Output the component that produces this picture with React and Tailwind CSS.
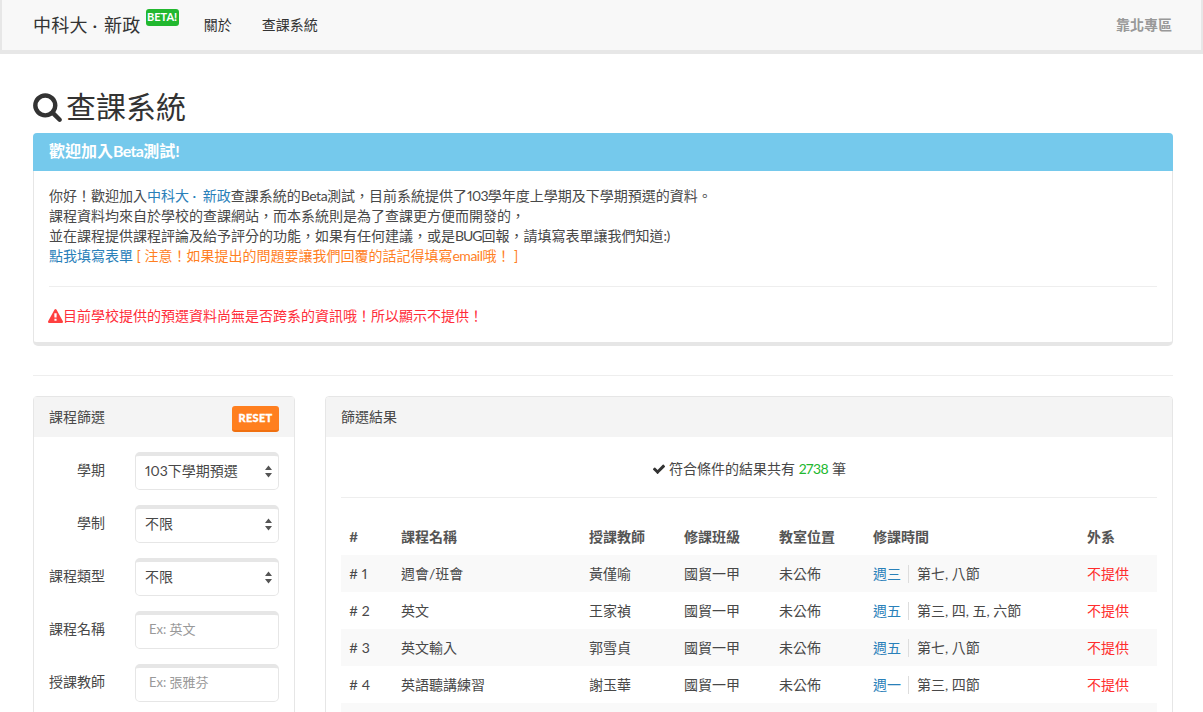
const rows = [
  { id: 1, name: '週會/班會', teacher: '黃僅喻', day: '週三', time: '第七, 八節' },
  { id: 2, name: '英文', teacher: '王家禎', day: '週五', time: '第三, 四, 五, 六節' },
  { id: 3, name: '英文輸入', teacher: '郭雪貞', day: '週五', time: '第七, 八節' },
  { id: 4, name: '英語聽講練習', teacher: '謝玉華', day: '週一', time: '第三, 四節' },
  { id: 5, name: '', teacher: '', day: '', time: '' },
];

const SearchIcon = () => (
  <svg className="-ml-px mr-[3px] text-[#333]" width="31" height="31" viewBox="0 0 1792 1792" fill="currentColor">
    <path d="M1216 832q0-185-131.5-316.5t-316.5-131.5-316.5 131.5-131.5 316.5 131.5 316.5 316.5 131.5 316.5-131.5 131.5-316.5zm512 832q0 52-38 90t-90 38q-54 0-90-38l-343-342q-179 124-399 124-143 0-273.5-55.5t-225-150-150-225-55.5-273.5 55.5-273.5 150-225 225-150 273.5-55.5 273.5 55.5 225 150 150 225 55.5 273.5q0 220-124 399l343 343q37 37 37 90z" />
  </svg>
);

const WarningIcon = () => (
  <svg className="-ml-px text-[#ff4040]" width="15" height="15" viewBox="0 0 1792 1792" fill="currentColor">
    <path d="M1024 1375v-190q0-14-9.5-23.5t-22.5-9.5h-192q-13 0-22.5 9.5t-9.5 23.5v190q0 14 9.5 23.5t22.5 9.5h192q13 0 22.5-9.5t9.5-23.5zm-2-374l18-459q0-12-10-19-13-11-24-11h-220q-11 0-24 11-10 7-10 21l17 457q0 10 10 16.5t24 6.5h185q14 0 23.5-6.5t10.5-16.5zm-14-934l768 1408q35 63-2 126-17 29-46.5 46t-63.5 17h-1536q-34 0-63.5-17t-46.5-46q-37-63-2-126l768-1408q17-31 47-49t65-18 65 18 47 49z" />
  </svg>
);

const CheckIcon = () => (
  <svg className="mr-[3px] text-[#333]" width="14" height="14" viewBox="0 0 1792 1792" fill="currentColor">
    <path d="M1671 566q0 40-28 68l-724 724-136 136q-28 28-68 28t-68-28l-136-136-362-362q-28-28-28-68t28-68l136-136q28-28 68-28t68 28l294 295 656-657q28-28 68-28t68 28l136 136q28 28 28 68z" />
  </svg>
);

const SelectField = ({ label, value }) => (
  <div className="flex items-center h-[38px] mb-[15px]">
    <label className="w-[71px] text-right -mt-0.5">{label}</label>
    <div className="relative ml-[30px] w-[144px]">
      <select
        defaultValue={value}
        className="appearance-none w-full h-[38px] pl-[9px] pr-6 pb-1 rounded-[5px] border border-[#e6e6e6] border-t-4 bg-white text-[14px] text-[#484848] outline-none"
      >
        <option>{value}</option>
      </select>
      <svg className="absolute right-[7px] top-[13px] pointer-events-none" width="7" height="13" viewBox="0 0 7 13">
        <path d="M3.5 0.5 L7 5 L0 5 Z M0 8 L7 8 L3.5 12.5 Z" fill="#555" />
      </svg>
    </div>
  </div>
);

const InputField = ({ label, placeholder }) => (
  <div className="flex items-center h-[38px] mb-[15px]">
    <label className="w-[71px] text-right -mt-0.5">{label}</label>
    <input
      placeholder={placeholder}
      className="ml-[30px] w-[144px] h-[38px] pl-[13px] pr-2 pb-1.5 rounded-[5px] border border-[#e6e6e6] border-t-4 bg-white text-[13px] outline-none placeholder:text-[#999]"
    />
  </div>
);

export default function App() {
  return (
    <div className="h-[712px] overflow-hidden bg-white text-[14px] leading-5 text-[#484848] proportional-nums font-['Lato','Noto_Sans_CJK_TC',sans-serif]">
      <nav className="flex items-center h-[54px] bg-[#f8f8f8] border-l-2 border-r-2 border-b-4 border-[#e7e7e7] pl-[31px] pr-[29px] text-[#333]">
        <a className="text-[18px] leading-[50px] tracking-[0.2px]">中科大 ·<span className="ml-[2px]"> 新政</span></a>
        <span className="self-start mt-[9px] ml-[5px] h-[17px] px-[1.5px] rounded-[3px] bg-[#22b82f] text-white text-[11px] leading-[16px] font-bold">BETA!</span>
        <a className="ml-[25px]">關於</a>
        <a className="ml-[30px]">查課系統</a>
        <a className="ml-auto font-bold text-[#999]">靠北專區</a>
      </nav>

      <main className="w-[1140px] ml-[33px]">
        <h1 className="flex items-center h-[79px] pt-[25px] text-[30px] font-normal text-[#333]">
          <SearchIcon />
          查課系統
        </h1>

        <section className="rounded-[5px] border-x border-[#e6e6e6] border-b-4 h-[213px]">
          <div className="h-[38px] -mx-px px-4 rounded-t-[4px] bg-[#75c9ec] text-white text-[16px] font-bold leading-[36px]">歡迎加入<span className="tracking-[-0.7px]">Beta</span>測試!</div>
          <div className="px-[15px] pt-[15px]">
            <p>
              你好！歡迎加入<span className="text-[#2980b9]">中科大 ·<span className="ml-[3px]"> 新政</span></span>查課系統的<span className="tracking-[-0.5px]">Beta</span>測試，目前系統提供了<span className="tracking-[-0.7px]">103</span>學年度上學期及下學期預選的資料。<br />
              課程資料均來自於學校的查課網站，而本系統則是為了查課更方便而開發的，<br />
              並在課程提供課程評論及給予評分的功能，如果有任何建議，或是<span className="tracking-[-1px]">BUG</span>回報，請填寫表單讓我們知道<span className="tracking-[-0.5px]">:)</span><br />
              <a className="text-[#2980b9]">點我填寫表單</a> <span className="text-[#ff7f1f]">[ 注意！如果提出的問題要讓我們回覆的話記得填寫<span className="tracking-[-0.5px]">email</span>哦！ ]</span>
            </p>
            <hr className="mt-5 mb-5 border-[#eee]" />
            <p className="text-[#ff2d3a] flex items-center -mt-px">
              <WarningIcon />
              目前學校提供的預選資料尚無是否跨系的資訊哦！所以顯示不提供！
            </p>
          </div>
        </section>

        <hr className="mt-[29px] mb-5 border-[#eee]" />

        <div className="flex gap-[30px] items-start">
          <aside className="w-[262px] h-[400px] shrink-0 rounded-[4px] border border-[#e6e6e6]">
            <div className="flex items-start justify-between h-[40px] bg-[#f4f4f4] px-[15px]">
              <span className="leading-[39px]">課程篩選</span>
              <button className="mt-[9px] w-[47px] h-[26px] rounded-[3px] bg-[#ff7f1f] border-b-2 border-[#f07010] text-white text-[11px] font-black tracking-[0.3px] [-webkit-text-stroke:0.3px_white]">RESET</button>
            </div>
            <div className="pt-[15px]">
              <SelectField label="學期" value="103下學期預選" />
              <SelectField label="學制" value="不限" />
              <SelectField label="課程類型" value="不限" />
              <InputField label="課程名稱" placeholder="Ex: 英文" />
              <InputField label="授課教師" placeholder="Ex: 張雅芬" />
            </div>
          </aside>

          <section className="flex-1 h-[400px] rounded-[4px] border border-[#e6e6e6] overflow-hidden">
            <div className="h-[40px] bg-[#f4f4f4] px-[15px] leading-[39px]">篩選結果</div>
            <div className="px-[15px]">
              <p className="h-[61px] flex items-center justify-center border-b border-[#eee] mb-[20px] pt-[3px]">
                <CheckIcon />
                符合條件的結果共有&nbsp;<span className="text-[#22b82f] tracking-[-0.5px]">2738</span>&nbsp;筆
              </p>
              <table className="w-[816px] table-fixed border-collapse">
                <colgroup>
                  <col className="w-[52px]" />
                  <col className="w-[188px]" />
                  <col className="w-[95px]" />
                  <col className="w-[95px]" />
                  <col className="w-[94px]" />
                  <col className="w-[214px]" />
                  <col className="w-[78px]" />
                </colgroup>
                <thead>
                  <tr className="h-[37px] text-left">
                    {['#', '課程名稱', '授課教師', '修課班級', '教室位置', '修課時間', '外系'].map((h) => (
                      <th key={h} className="px-2 font-bold text-[#555]">{h}</th>
                    ))}
                  </tr>
                </thead>
                <tbody>
                  {rows.map((r) => (
                    <tr key={r.id} className="h-[37px] odd:bg-[#f9f9f9]">
                      {r.name ? (
                        <>
                          <td className="px-2"># {r.id}</td>
                          <td className="px-2">{r.name}</td>
                          <td className="px-2">{r.teacher}</td>
                          <td className="px-2">國貿一甲</td>
                          <td className="px-2">未公佈</td>
                          <td className="px-2">
                            <span className="text-[#2980b9] pr-[7px] mr-[8px] border-r border-[#ddd] inline-block leading-[18px]">{r.day}</span>
                            {r.time}
                          </td>
                          <td className="px-2 text-[#ff2d2d]">不提供</td>
                        </>
                      ) : (
                        <td colSpan={7} />
                      )}
                    </tr>
                  ))}
                </tbody>
              </table>
            </div>
          </section>
        </div>
      </main>
    </div>
  );
}
